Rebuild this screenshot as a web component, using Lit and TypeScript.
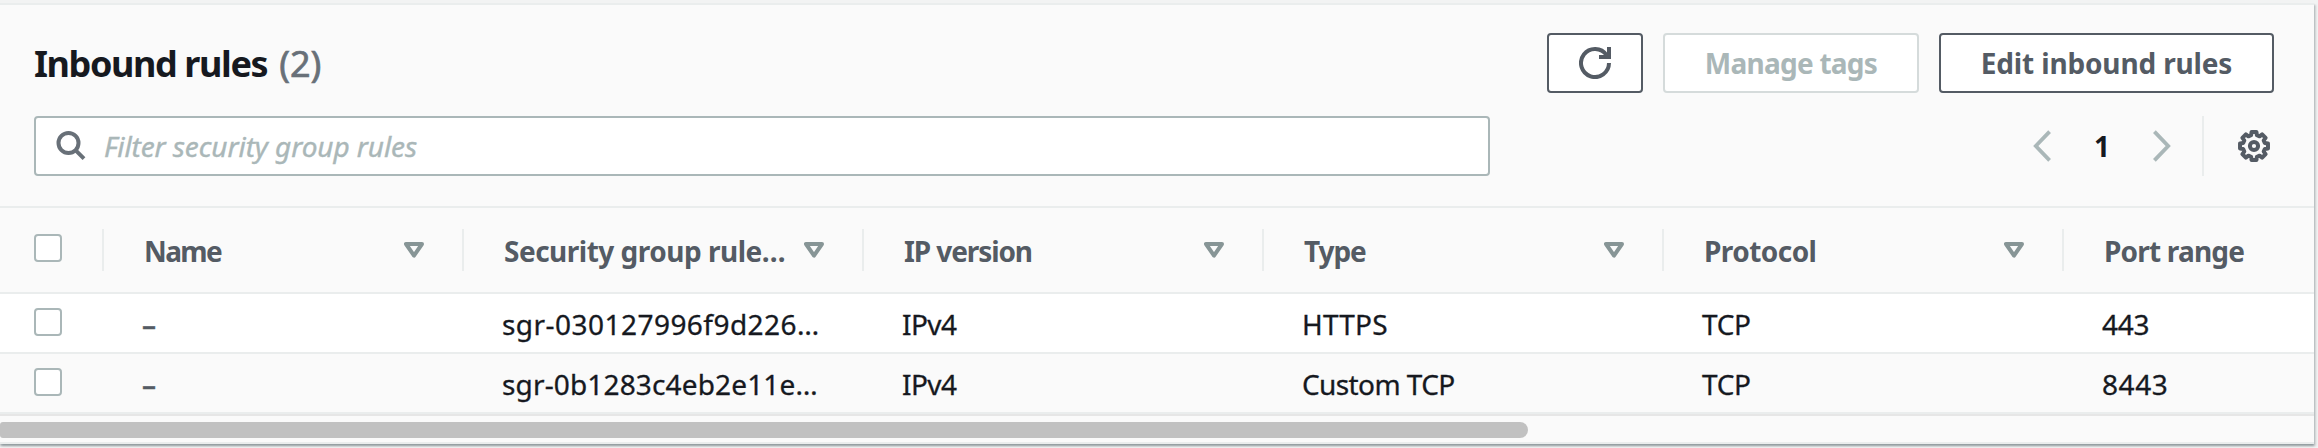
import { LitElement, html, svg, css } from "lit";
import { customElement } from "lit/decorators.js";

/** A piece of text with its letter spacing in px. */
type Label = [text: string, tracking: number];

const columns: Label[] = [
  ["Name", -1.6],
  ["Security group rule…", -0.5],
  ["IP version", -1.1],
  ["Type", -1.1],
  ["Protocol", -0.55],
  ["Port range", -0.8],
];

const rules: Label[][] = [
  [["–", 0], ["sgr-030127996f9d226…", 0.46], ["IPv4", -0.57], ["HTTPS", 0.2], ["TCP", -0.35], ["443", -0.25]],
  [["–", 0], ["sgr-0b1283c4eb2e11e…", 0.15], ["IPv4", -0.57], ["Custom TCP", -0.6], ["TCP", -0.35], ["8443", 0.6]],
];

const label = ([text, tracking]: Label) =>
  html`<span class="label" style="letter-spacing:${tracking}px">${text}</span>`;

/** Closed outline of an eight-toothed gear centred on 16,16. */
function gearOutline(): string {
  const points: string[] = [];
  for (let tooth = 0; tooth < 8; tooth++) {
    const steps: [number, number][] = [[-15, 11.2], [-10, 14.2], [10, 14.2], [15, 11.2]];
    for (const [offset, radius] of steps) {
      const angle = ((tooth * 45 + offset) * Math.PI) / 180;
      points.push(`${(16 + radius * Math.sin(angle)).toFixed(2)},${(16 - radius * Math.cos(angle)).toFixed(2)}`);
    }
  }
  return points.join(" ");
}

const icon = (name: string, w: number, h: number, body: unknown) =>
  html`<svg class="icon ${name}" width=${w} height=${h} viewBox="0 0 ${w} ${h}" fill="none" stroke="currentColor" stroke-width="4">${body}</svg>`;

const refreshIcon = icon("refresh-icon", 32, 32, svg`<path d="M30 16A14 14 0 1 1 27.6 8.2"/><path d="M30 0V10H20"/>`);
const searchIcon = icon("search-icon", 30, 30, svg`<circle cx="12.5" cy="12" r="10"/><path d="M19.5 19.2L28 27.6"/>`);
const prevIcon = icon("chevron", 18, 32, svg`<path d="M16.6 1.6L2.8 16L16.6 30.4" stroke-width="3.8"/>`);
const nextIcon = icon("chevron", 18, 32, svg`<path d="M1.4 1.6L15.2 16L1.4 30.4" stroke-width="3.8"/>`);
const gearIcon = icon("gear", 32, 32, svg`<polygon points=${gearOutline()} stroke-width="4" stroke-linejoin="round"/><circle cx="16" cy="16" r="4.1"/>`);
const sortIcon = icon("sort", 20, 16, svg`<path d="M2 2H18L10 13.6Z" stroke-linejoin="round"/>`);

@customElement("app-root")
export class AppRoot extends LitElement {
  static styles = css`
    :host {
      display: block;
      box-sizing: border-box;
      height: 448px;
      padding-top: 3px;
      overflow: hidden;
      background: #f2f3f3;
      color: #16191f;
      font: 28px/40px "Noto Sans", "Open Sans", sans-serif;
      white-space: nowrap;
    }
    * { box-sizing: border-box; }
    .icon { display: block; flex: none; }
    .panel {
      width: 2314px;
      height: 441px;
      border-top: 2px solid #eaeded;
      border-bottom: 2px solid #eaeded;
      background: #fafafa;
      box-shadow: 0 2px 2px 0 rgba(0, 28, 36, 0.3), 2px 2px 2px 0 rgba(0, 28, 36, 0.15);
    }
    .heading {
      display: flex;
      align-items: center;
      height: 60px;
      margin: 28px 40px 23px 34px;
    }
    .title {
      display: flex;
      gap: 12px;
      margin: 0 auto 0 0;
      padding-top: 2px;
      font-size: 36px;
      font-weight: 700;
      letter-spacing: -1.4px;
    }
    .count {
      color: #687078;
      font-weight: 400;
      letter-spacing: 0;
      -webkit-text-stroke: 0.7px currentColor;
    }
    .actions { display: flex; gap: 20px; }
    .button {
      display: flex;
      align-items: center;
      justify-content: center;
      height: 60px;
      padding: 0;
      border: 2px solid #545b64;
      border-radius: 4px;
      background: #fff;
      color: #545b64;
      font: inherit;
      font-weight: 700;
    }
    .refresh { width: 96px; }
    .manage { width: 256px; border-color: #d5dbdb; color: #aab7b8; letter-spacing: -0.75px; }
    .edit { width: 335px; letter-spacing: -0.15px; }
    .tools {
      display: flex;
      align-items: center;
      height: 60px;
      margin: 0 44px 30px 34px;
    }
    .filter {
      display: flex;
      align-items: center;
      gap: 18px;
      width: 1456px;
      height: 60px;
      margin-right: auto;
      padding-left: 20px;
      border: 2px solid #aab7b8;
      border-radius: 4px;
      background: #fff;
      color: #aab7b8;
      font-style: italic;
      letter-spacing: -0.09px;
      -webkit-text-stroke: 0.4px currentColor;
    }
    .search-icon { color: #687078; }
    .pages { display: flex; align-items: center; margin-right: 31px; }
    .chevron { color: #aab7b8; }
    .page { width: 102px; text-align: center; font-weight: 700; }
    .settings {
      display: flex;
      align-items: center;
      height: 60px;
      padding-left: 34px;
      border-left: 2px solid #eaeded;
      color: #545b64;
    }
    .row {
      display: grid;
      grid-template-columns: 104px 360px repeat(4, 400px) 250px;
      height: 60px;
      border-bottom: 2px solid #eaeded;
      background: #fff;
    }
    .row:nth-child(odd) { background: #fafafa; }
    .table { overflow: hidden; }
    .head {
      align-items: center;
      height: 88px;
      border-top: 2px solid #eaeded;
      color: #545b64;
      font-weight: 700;
    }
    .pick { padding: 14px 0 0 34px; }
    .head-pick {
      display: flex;
      height: 42px;
      padding: 5px 0 0 34px;
      border-right: 2px solid #eaeded;
    }
    .box {
      width: 28px;
      height: 28px;
      border: 2px solid #aab7b8;
      border-radius: 4px;
      background: #fff;
    }
    .column {
      display: flex;
      align-items: center;
      justify-content: space-between;
      height: 42px;
      padding: 0 38px 0 40px;
      border-right: 2px solid #eaeded;
    }
    .column .label { padding-top: 1px; }
    .column:last-child { border: 0; }
    .sort { color: #879596; }
    .cell { padding: 10px 0 0 38px; -webkit-text-stroke: 0.3px currentColor; }
    .cell:nth-child(2) { color: #545b64; font-weight: 600; }
    .scrollbar { height: 28px; padding-top: 6px; border-top: 2px solid #e6e6e6; }
    .thumb { width: 1528px; height: 16px; border-radius: 3px 8px 8px 3px; background: #c1c1c1; }
  `;

  render() {
    return html`
      <section class="panel">
        <header class="heading">
          <h2 class="title"><span>Inbound rules</span><span class="count">(2)</span></h2>
          <div class="actions">
            <button class="button refresh" aria-label="Refresh">${refreshIcon}</button>
            <button class="button manage">Manage tags</button>
            <button class="button edit">Edit inbound rules</button>
          </div>
        </header>
        <div class="tools">
          <div class="filter">${searchIcon}<span>Filter security group rules</span></div>
          <nav class="pages">${prevIcon}<span class="page">1</span>${nextIcon}</nav>
          <div class="settings">${gearIcon}</div>
        </div>
        <div class="table">
          <div class="row head">
            <div class="head-pick"><div class="box"></div></div>
            ${columns.map((c, i) => html`<div class="column">${label(c)}${i < columns.length - 1 ? sortIcon : ""}</div>`)}
          </div>
          ${rules.map((rule) => html`
            <div class="row">
              <div class="pick"><div class="box"></div></div>
              ${rule.map((value) => html`<div class="cell">${label(value)}</div>`)}
            </div>`)}
        </div>
        <div class="scrollbar"><div class="thumb"></div></div>
      </section>
    `;
  }
}
